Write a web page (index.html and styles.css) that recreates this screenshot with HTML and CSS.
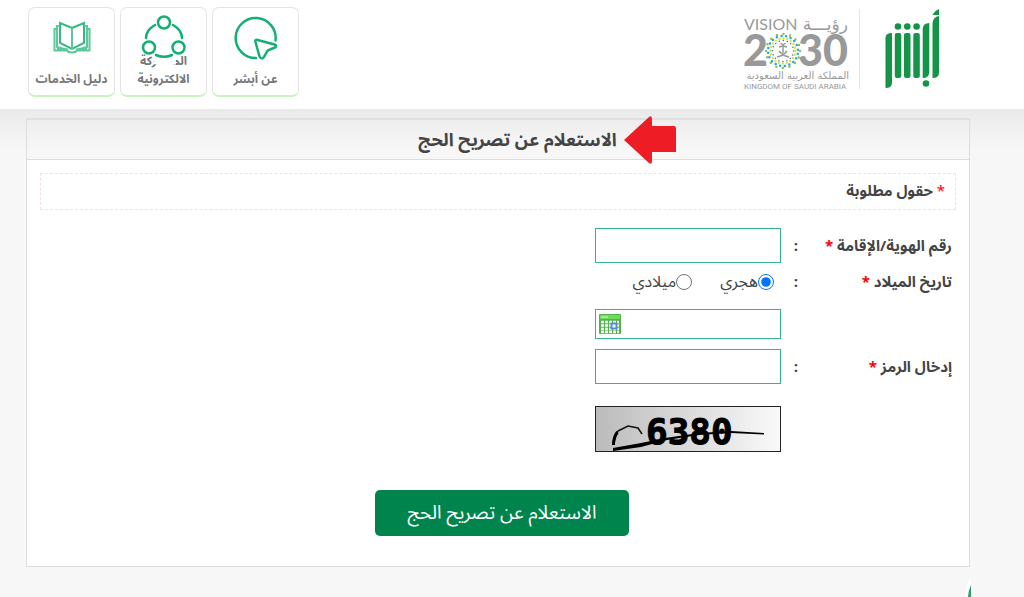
FILE: index.html
```html
<!DOCTYPE html>
<html lang="ar" dir="rtl">
<head>
    <meta charset="UTF-8">
    <title>الاستعلام عن تصريح الحج</title>
    <link rel="stylesheet" href="styles.css">
</head>
<body>
<header class="header">
    <div class="logos">
        <a href="#" class="absher" aria-label="أبشر">
            <svg width="55" height="80" viewBox="0 0 55 80">
                <g fill="#149447">
                    <path d="M47.500 6 Q50 1.500 54 0 V6z"/>
                    <path d="M47.500 14 Q48 8 54 7 V64 Q54 69 47.500 69z"/>
                    <path d="M37.700 20 Q38 14 44.300 14 V63 Q44 69 37.700 69z"/>
                    <rect x="28.300" y="24" width="6.500" height="45" rx="2"/>
                    <rect x="19" y="24" width="6.500" height="45" rx="2"/>
                    <rect x="9.800" y="24" width="6.500" height="45" rx="2"/>
                    <path d="M.5 28 Q1 24 7 24 V74 Q7 79 .5 79z"/>
                    <circle cx="13" cy="17.500" r="3.300"/>
                    <circle cx="22.300" cy="17.500" r="3.300"/>
                    <circle cx="31.600" cy="17.500" r="3.300"/>
                    <circle cx="41" cy="74.500" r="3.300"/>
                </g>
            </svg>
        </a>
        <a href="#" class="vision" aria-label="رؤية 2030">
            <svg width="108" height="76" viewBox="0 0 108 76" direction="ltr">
                <g fill="#999">
                    <text x="1" y="15" class="v-name">VISION</text>
                    <text x="105" y="15" class="v-ar">رؤيـــة</text>
                    <text x="0" y="51" class="v-year">2</text>
                    <text x="55" y="51" class="v-year">30</text>
                    <text x="106" y="64" class="v-country">المملكة العربية السعودية</text>
                    <text x="1" y="74" class="v-kingdom">KINGDOM OF SAUDI ARABIA</text>
                </g>
                <g fill="none" stroke-width="2.500" stroke-linecap="round">
                    <circle cx="40" cy="36" r="17" stroke="#89c45c" stroke-dasharray="0 6.675"/>
                    <circle cx="40" cy="36" r="15" stroke="#1fa9de" stroke-dasharray="0 4.712" stroke-dashoffset="2"/>
                    <circle cx="40" cy="36" r="12.500" stroke="#e0e04f" stroke-dasharray="0 3.927"/>
                    <circle cx="40" cy="36" r="10.500" stroke="#3a75a8" stroke-width="1.500" stroke-dasharray="0 4.123"/>
                </g>
                <path d="M40 38V30M40 31l-4 1M40 31l4 1M40 30l-2.500-2M40 30l2.500-2M34 42q6-1 10-6M46 42q-6-1-10-6" fill="none" stroke="#999" stroke-width="1.500"/>
            </svg>
        </a>
    </div>
    <nav class="nav">
        <a href="#" class="card">
            <svg width="48" height="48" viewBox="0 0 48 48">
                <g fill="none" stroke="#13b072" stroke-width="2.500" stroke-linecap="round" stroke-linejoin="round">
                    <path d="M24 43A20 20 0 1 1 43.500 25.500"/>
                    <path d="M27.500 25.500Q22.500 23.500 23.500 27L27.500 41.500Q29.500 45 32 42L35 36.500Q36 35 38 34.500L43 32.500Q45.500 30.500 42.500 29.500z"/>
                </g>
            </svg>
            <span>عن أبشر</span>
        </a>
        <a href="#" class="card share">
            <svg width="48" height="48" viewBox="0 0 48 48">
                <path d="M14 36h22v13q-7 2-11 2l-11-2z" fill="#fff"/>
                <g fill="#fff" stroke="#13b072" stroke-width="2.500" stroke-linecap="round">
                    <circle cx="24" cy="7.500" r="6"/>
                    <circle cx="9" cy="32.500" r="6"/>
                    <circle cx="38.500" cy="32.500" r="6"/>
                    <path d="M15 10Q6 15 6 23M33 10Q42 15 42 23M16 40Q24 43.500 32 40"/>
                </g>
            </svg>
            <span>المشاركة<br>الالكترونية</span>
        </a>
        <a href="#" class="card">
            <svg width="48" height="48" viewBox="0 0 48 48">
                <g fill="none" stroke="#5cc99c" stroke-width="2">
                    <path d="M24 13l12-5v20l-12 6-12-6V8z" stroke="#32b982"/>
                    <path d="M24 13v21M12 11H9v21l11 3M36 11h3v21l-11 3"/>
                    <path d="M9 14H6.500v21.500H19q1 2 5 2t5-2h12.500V14H39M9 33.500l11 1M39 33.500l-11 1"/>
                </g>
            </svg>
            <span>دليل الخدمات</span>
        </a>
    </nav>
</header>

<main class="panel">
    <h1 class="title">
        <svg class="arrow" width="52" height="48" viewBox="0 0 52 48">
            <path d="M0 24L25 1Q28-1 28 3V10H50Q52 10 52 13V36H28V45Q28 49 25 47z" fill="#ee1c25"/>
        </svg>
        <span>الاستعلام عن تصريح الحج</span>
    </h1>
    <form class="content">
        <p class="required"><i>*</i> حقول مطلوبة</p>

        <div class="row">
            <label for="idNumber">رقم الهوية/الإقامة <i>*</i></label>
            <b>:</b>
            <input type="text" id="idNumber" class="text">
        </div>
        <div class="row dates">
            <label for="birthDate">تاريخ الميلاد <i>*</i></label>
            <b>:</b>
            <div class="radios">
                <label><input type="radio" name="calendar" checked>هجري</label>
                <label><input type="radio" name="calendar">ميلادي</label>
            </div>
        </div>
        <div class="row">
            <div class="date">
                <input type="text" id="birthDate" class="text">
                <svg width="22" height="20" viewBox="0 0 22 20">
                    <rect width="22" height="20" rx="1" fill="#4fb548"/>
                    <path d="M1 1h20v4H1z" fill="#6edb5c"/>
                    <path d="M2 3h7" stroke="#d6f7cf"/>
                    <path d="M2 8h18M2 11.500h18M2 15h18M2 18h18" stroke="#fff" stroke-width="2.500" stroke-dasharray="3 1"/>
                    <rect x="12.500" y="9.500" width="5" height="5" fill="#fff" stroke="#5b86e0" stroke-width="2"/>
                </svg>
            </div>
        </div>
        <div class="row">
            <label for="code">إدخال الرمز <i>*</i></label>
            <b>:</b>
            <input type="text" id="code" class="text">
        </div>
        <div class="row captcha">
            <svg width="186" height="46" viewBox="0 0 186 46">
                <defs>
                    <linearGradient id="grey">
                        <stop offset="0" stop-color="#bbb"/>
                        <stop offset="1" stop-color="#fafafa"/>
                    </linearGradient>
                </defs>
                <rect x=".5" y=".5" width="185" height="45" fill="url(#grey)" stroke="#222"/>
                <text x="51" y="38" class="digits" direction="ltr">6380</text>
                <path d="M19 39Q20 27 23 25L33 20 43 22 47 28" fill="none" stroke="#111" stroke-width="1.500"/>
                <path d="M18.500 39q0-8 4-13" fill="none" stroke="#000" stroke-width="3"/>
                <path d="M18 42L46 37 70 32 104 27 136 25 169 27V28.500L136 27 104 29 72 34 46 41 18 45z"/>
            </svg>
        </div>
        <div class="actions">
            <button type="submit">الاستعلام عن تصريح الحج</button>
        </div>
    </form>
</main>

<a href="#" class="chat" aria-label="المساعدة">
    <svg width="6" height="20" viewBox="0 0 6 20">
        <path d="M6 0Q1 8 0 20h6z" fill="#fff"/>
        <path d="M6 8Q3.500 13 3 20h3z" fill="#2f9d6c"/>
    </svg>
</a>
</body>
</html>
```
FILE: styles.css
```css
* {
    margin: 0;
    padding: 0;
    box-sizing: border-box;
}

body {
    min-height: 100vh;
    background: #f7f7f7 linear-gradient(#eaeaea 109px, #f7f7f7 150px) no-repeat;
    color: #444;
    font-family: "Noto Sans Arabic", "Noto Kufi Arabic", "Noto Sans", "DejaVu Sans", sans-serif;
    font-size: 15px;
    overflow-x: hidden;
}

a {
    color: inherit;
    text-decoration: none;
}

i {
    color: #f00;
    font-style: normal;
}

svg {
    display: block;
}

/* header */
.header {
    display: flex;
    justify-content: space-between;
    height: 109px;
    padding: 7px 84px 0 28px;
    background: #fff;
}

.logos {
    display: flex;
    align-items: flex-start;
}

.absher {
    padding: 2px 0 0 25px;
}

.vision {
    height: 80px;
    margin-top: 2px;
    padding: 6px 8px 0 0;
    border-right: 1px solid #e6e6e6;
}

.v-name {
    font: 16px Lato, sans-serif;
}

.v-ar {
    font: 17px "DejaVu Sans", sans-serif;
    text-anchor: end;
}

.v-year {
    font: 900 43px Lato, sans-serif;
}

.v-country {
    font: 10px "DejaVu Sans", sans-serif;
    text-anchor: end;
}

.v-kingdom {
    font: 8px Roboto, sans-serif;
}

.nav {
    display: flex;
    gap: 5px;
}

.card {
    display: flex;
    flex-direction: column;
    align-items: center;
    width: 87px;
    height: 90px;
    padding-top: 7px;
    border: 1px solid #e4e4e4;
    border-bottom: 2px solid #c9f3c0;
    border-radius: 7px;
    color: #777;
    font-size: 12px;
    font-weight: bold;
    line-height: 18px;
    text-align: center;
    white-space: nowrap;
}

.card span {
    margin-top: 8px;
}

.card svg {
    position: relative;
    overflow: visible;
}

.share span {
    margin-top: -10px;
}

/* form */
.panel {
    margin: 9px 54px 0 26px;
    border: 1px solid #ddd;
    border-top: 2px solid #e0e0e0;
}

.title {
    display: flex;
    align-items: center;
    justify-content: center;
    gap: 7px;
    height: 40px;
    padding-left: 98px;
    border-bottom: 1px solid #ddd;
    font-size: 18px;
}

.arrow {
    flex: none;
}

.content {
    padding: 13px;
    background: #fff;
}

.required {
    height: 37px;
    margin-bottom: 18px;
    padding: 0 10px;
    border: 1px dashed #f6dfe3;
    font-weight: bold;
    line-height: 34px;
}

.required i {
    font-weight: normal;
}

.row {
    display: grid;
    grid-template-columns: 147px 24px 186px;
    align-items: center;
    margin-bottom: 10px;
    padding-right: 4px;
}

.row > label {
    font-weight: bold;
}

.row > .text, .date, .radios, .captcha svg {
    grid-column: 3;
}

.row b {
    padding-right: 7px;
}

.text {
    width: 100%;
    height: 35px;
    padding: 0 6px;
    border: 1px solid #35b584;
    background: #fff;
    font: inherit;
}

.dates {
    height: 26px;
    margin: -8px 0 18px;
}

.radios {
    display: flex;
    gap: 28px;
    padding-right: 7px;
    font-size: 16px;
}

.radios label {
    display: flex;
    align-items: center;
    white-space: nowrap;
}

.radios input {
    width: 16px;
    height: 16px;
}

.date {
    position: relative;
}

.date .text {
    display: block;
    height: 30px;
    padding-left: 30px;
}

.date svg {
    position: absolute;
    left: 4px;
    top: 5px;
}

.captcha {
    margin: 22px 0 38px;
}

.digits {
    font: bold 36px "DejaVu Sans Mono", monospace;
    stroke: #000;
    stroke-width: 1px;
}

.actions {
    padding-right: 327px;
}

.actions button {
    width: 254px;
    height: 46px;
    margin-bottom: 17px;
    border: 0;
    border-radius: 5px;
    background: #00844e;
    color: #fff;
    font: inherit;
    font-size: 19px;
}

.chat {
    position: fixed;
    bottom: 0;
    right: 53px;
}
```
